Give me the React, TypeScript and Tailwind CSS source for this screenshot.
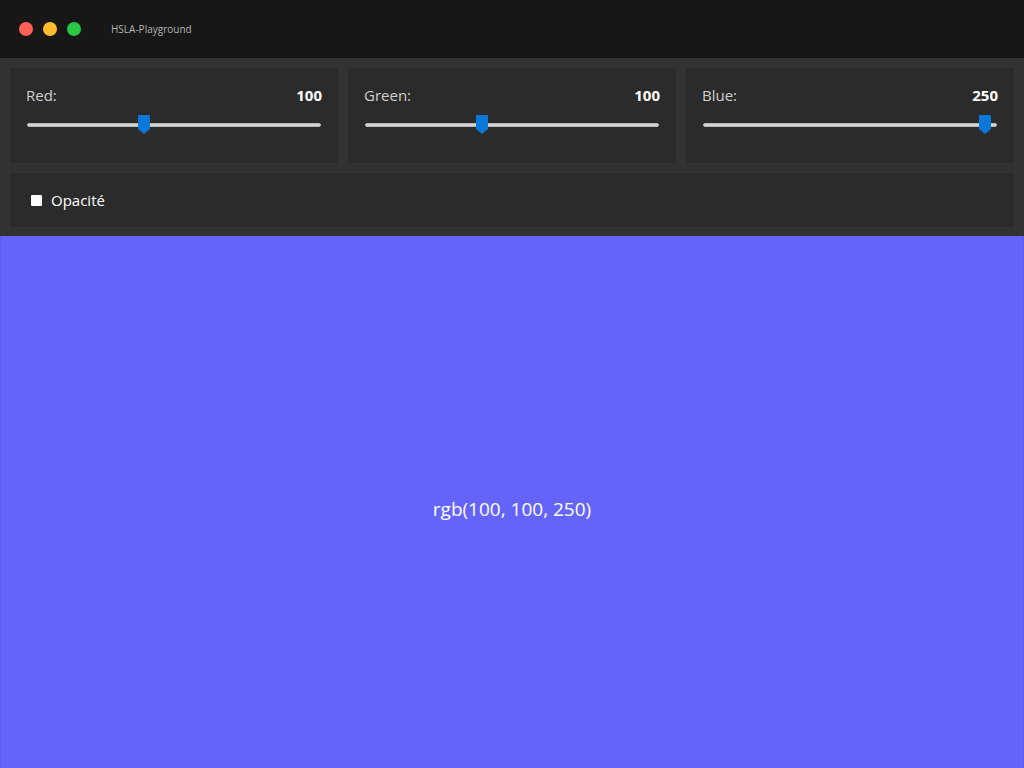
import React from "react";

function Slider({ label, value }: { label: string; value: number }) {
  const pct = value / 255;
  return (
    <div className="flex-1 h-[95px] bg-[#2b2b2b] rounded-[3px] px-[16px] pt-[16px]">
      <div className="flex justify-between items-center h-[22px]">
        <span className="text-[15px] text-[#d0d0d0]">{label}</span>
        <span className="text-[15px] font-bold text-white">{value}</span>
      </div>
      <div className="relative mt-[9px] h-[20px] mx-[1px]">
        <div className="absolute left-0 right-0 top-[8px] h-[4px] bg-[#d4d4d4] border border-[#b8b8b8] rounded-[2px]" />
        <svg
          className="absolute top-0"
          style={{ left: `calc(${pct} * (100% - 12px))` }}
          width="12"
          height="19"
          viewBox="0 0 12 19"
        >
          <path d="M1 0 H11 Q12 0 12 1 V14 L6 19 L0 14 V1 Q0 0 1 0 Z" fill="#0a78d8" />
        </svg>
      </div>
    </div>
  );
}

export default function App() {
  return (
    <div
      className="w-[1024px] h-[768px] flex flex-col bg-[#323232] overflow-hidden"
      style={{ fontFamily: '"Open Sans", "Noto Sans", sans-serif' }}
    >
      <div className="h-[58px] bg-[#171717] flex items-center shrink-0">
        <div className="flex items-center gap-[10px] pl-[19px]">
          <span className="w-[14px] h-[14px] rounded-full bg-[#fe5f57]" />
          <span className="w-[14px] h-[14px] rounded-full bg-[#febc2e]" />
          <span className="w-[14px] h-[14px] rounded-full bg-[#28c840]" />
        </div>
        <span className="ml-[30px] text-[10px] text-[#b5b5b5]">HSLA-Playground</span>
      </div>
      <div className="flex flex-col gap-[10px] pt-[10px] px-[10px] pb-[9px] shrink-0">
        <div className="flex gap-[10px]">
          <Slider label="Red:" value={100} />
          <Slider label="Green:" value={100} />
          <Slider label="Blue:" value={250} />
        </div>
        <div className="h-[54px] bg-[#2b2b2b] rounded-[3px] flex items-center pl-[21px]">
          <span className="w-[11px] h-[11px] bg-white rounded-[1px]" />
          <span className="ml-[9px] text-[15px] text-white">Opacité</span>
        </div>
      </div>
      <div className="flex-1 bg-[#6464fa] border-x border-[#5c5ce8] flex items-center justify-center">
        <span className="text-[19px] text-white mt-[14px]">rgb(100, 100, 250)</span>
      </div>
    </div>
  );
}
